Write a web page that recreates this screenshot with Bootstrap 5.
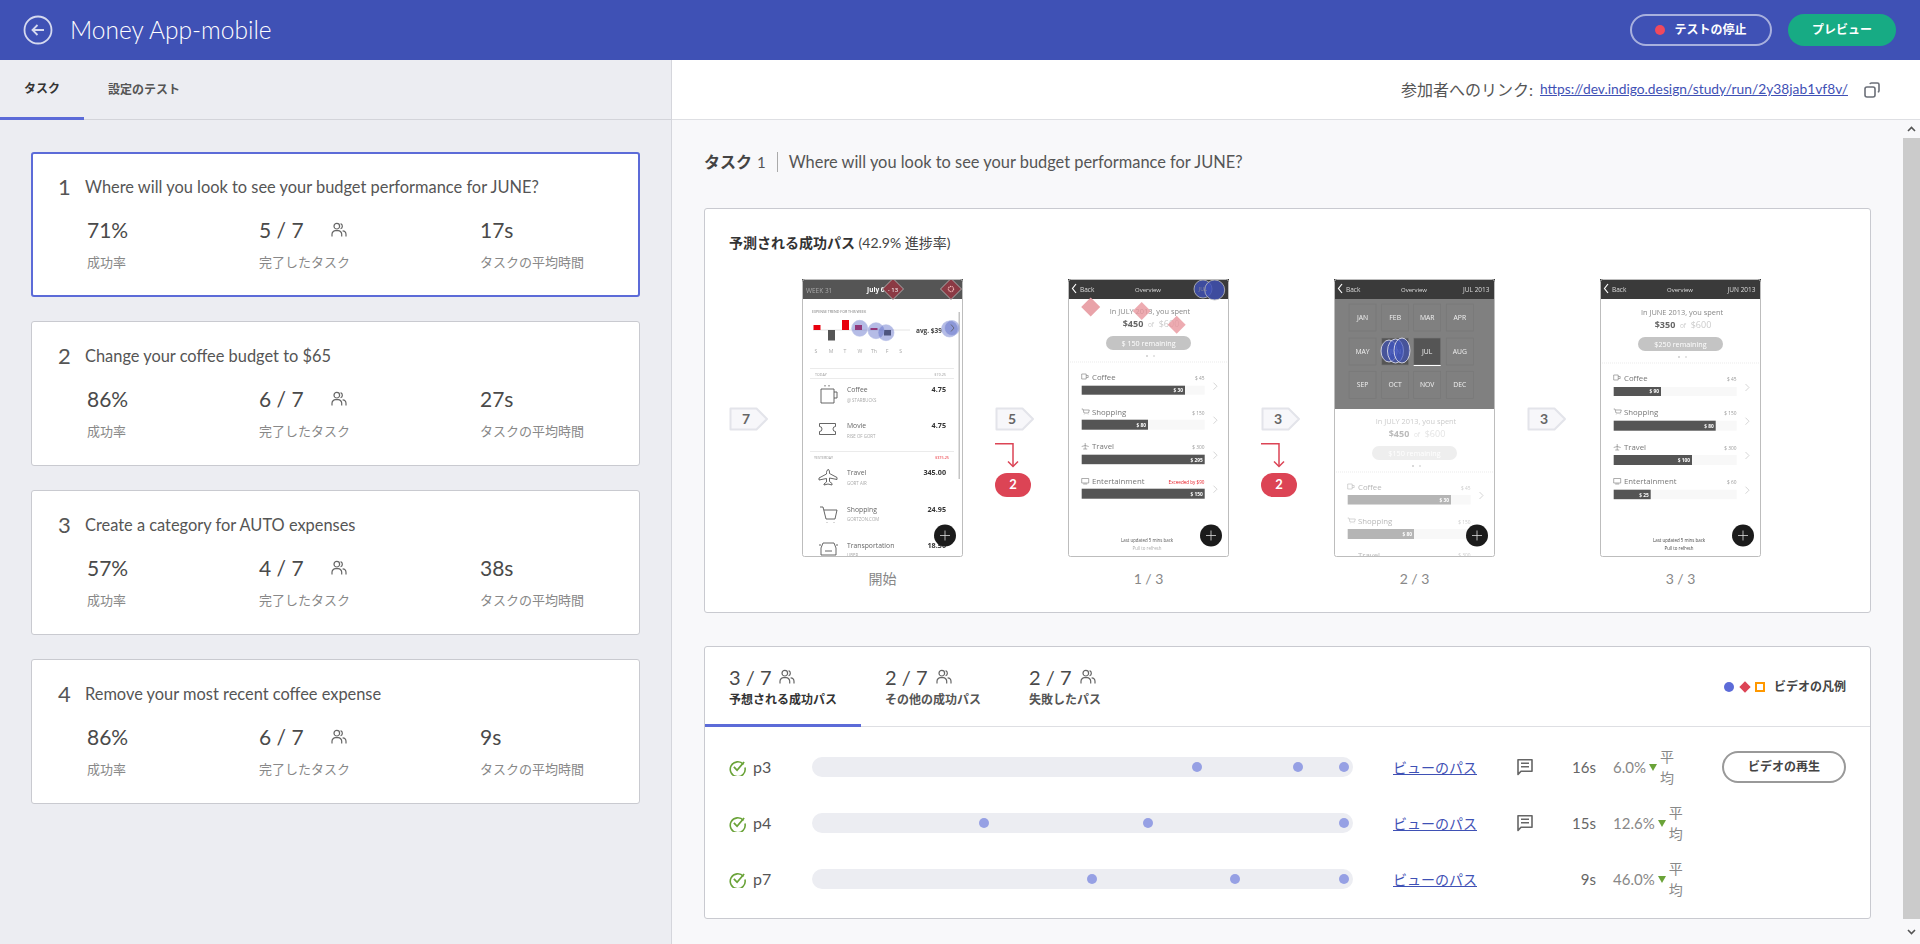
<!DOCTYPE html>
<html lang="ja">
<head>
<meta charset="UTF-8">
<title>Money App-mobile</title>
<link href="https://cdn.jsdelivr.net/npm/bootstrap@5.3.3/dist/css/bootstrap.min.css" rel="stylesheet">
<style>
  body { height: 944px; overflow: hidden; font-family: Lato, "Noto Sans CJK JP", sans-serif; color: #555; background: #fff; }
  .app-head { height: 60px; background: #3f51b5; padding: 0 24px 0 22px; }
  .app-title { font-size: 24.5px; font-weight: 300; color: #fff; margin-left: 16px; }
  .btn-stop, .btn-preview { height: 32px; border-radius: 16px; font-size: 12px; font-weight: 700; color: #fff; padding: 0; }
  .btn-stop { width: 142px; border: 2px solid rgba(255,255,255,.55); }
  .btn-preview { width: 108px; background: #17ab84; border: 0; margin-left: 16px; }
  .rec-dot { width: 10px; height: 10px; border-radius: 50%; background: #f0495d; margin-right: 9px; }
  .main-area { height: 884px; }
  .side-pane { width: 672px; background: #ecedf2; border-right: 1px solid #d5d6dc; }
  .side-tabs { height: 60px; border-bottom: 1px solid #d3d4da; }
  .side-tab { height: 60px; font-size: 12px; font-weight: 700; color: #555; padding: 0 24px; display: flex; align-items: center; }
  .side-tab.on { color: #333; border-bottom: 3px solid #5c6bd8; }
  .task-list { padding: 32px 31px; gap: 24px; }
  .task-box { height: 145px; border: 1px solid #c9cad0; border-radius: 3px; background: #fff; padding: 22px 26px 0; }
  .task-box.on { border: 2px solid #5c6bd8; padding: 21px 25px 0; }
  .task-num { width: 27px; font-size: 22px; line-height: 24px; color: #555; }
  .task-q { font-size: 16.4px; line-height: 24px; color: #555; }
  .stat-line { margin-top: 17px; padding-left: 29px; }
  .stat-a { width: 172px; }
  .stat-b { width: 221px; }
  .stat-c { width: 130px; }
  .stat-val { font-size: 21px; line-height: 28px; color: #4a4a4a; display: flex; align-items: center; }
  .stat-val svg { margin-left: 27px; }
  .stat-lab { font-size: 13px; line-height: 20px; color: #888; margin-top: 8px; }
  .link-bar { height: 60px; border-bottom: 1px solid #dedfe3; padding-right: 40px; }
  .link-lab { font-size: 16px; color: #555; margin-right: 7px; }
  .link-url { font-size: 13.8px; color: #3f51b5; margin-right: 16px; }
  .scroll-wrap { height: 824px; background: #f8f8fa; }
  .page-body { padding: 32px 32px 0; width: 1231px; }
  .fake-bar { width: 17px; background: #f8f8fa; }
  .fake-btn { height: 18px; }
  .fake-thumb { height: 781px; background: #cbcbcb; }
  .q-head { height: 24px; margin-top: -2px; margin-bottom: 34px; }
  .q-tag { font-size: 16px; font-weight: 700; color: #444; }
  .q-n { font-size: 15px; margin-left: 5px; padding-right: 11px; border-right: 1px solid #aaa; line-height: 20px; margin-right: 11px; }
  .panel-box { background: #fff; border: 1px solid #c9cad0; border-radius: 3px; }
  .path-box { height: 405px; padding: 24px 24px 0; margin-bottom: 33px; }
  .path-title { font-size: 14px; line-height: 20px; color: #444; margin-bottom: 26px; }
  .path-title b { color: #333; }
  .step-side { width: 73px; padding-top: 128px; }
  .step-main { width: 161px; margin-right: 32px; }
  .step-main svg { display: block; }
  .step-cap { font-size: 14px; color: #888; text-align: center; margin-top: 11px; }
  .fail-arrow { display: block; margin-top: 12px; }
  .fail-pill { width: 36px; height: 24px; border-radius: 12px; background: #dc4455; color: #fff; font-size: 13px; font-weight: 700; margin-top: 5px; }
  .scr { filter: blur(.3px); }
  .scr text { font-family: "Open Sans", sans-serif; }
  .run-box { height: 273px; }
  .run-tabs { height: 80px; border-bottom: 1px solid #dedfe3; }
  .run-tab { padding: 16px 24px 0; height: 80px; }
  .run-tab.on { border-bottom: 3px solid #5c6bd8; }
  .run-count { font-size: 20px; line-height: 28px; color: #4a4a4a; }
  .run-count svg { margin-left: 8px; }
  .run-lab { font-size: 12px; line-height: 18px; font-weight: 700; color: #555; }
  .run-tab.on .run-lab { color: #333; }
  .legend-lab { font-size: 12px; font-weight: 700; color: #444; margin-left: 9px; }
  .legend-wrap { padding-right: 24px; margin-left: auto; }
  .lg-dot { width: 10px; height: 10px; border-radius: 50%; background: #5c6bd8; }
  .lg-dia { width: 8px; height: 8px; background: #dc4455; transform: rotate(45deg); margin: 0 6px 0 7px; }
  .lg-sq { width: 10px; height: 10px; border: 2px solid #ff9800; }
  .run-rows { padding-top: 12px; }
  .run-row { height: 56px; padding: 0 24px; }
  .run-who { width: 83px; font-size: 16px; color: #555; }
  .run-who svg { margin-right: 7px; }
  .run-track { width: 541px; height: 20px; border-radius: 10px; background: #ecedf2; position: relative; }
  .run-dot { position: absolute; top: 5px; width: 10px; height: 10px; margin-left: -5px; border-radius: 50%; background: #96a0e4; }
  .run-link { width: 84px; margin-left: 40px; font-size: 14px; color: #3f51b5; }
  .run-note { width: 16px; margin-left: 40px; }
  .run-time { width: 63px; font-size: 15px; text-align: right; color: #666; }
  .run-pct { margin-left: 17px; font-size: 15px; color: #888; }
  .tri-down { width: 0; height: 0; border-left: 4px solid transparent; border-right: 4px solid transparent; border-top: 7px solid #6aa338; margin: 0 3px 0 3px; }
  .avg-lab { width: 15px; font-size: 14px; line-height: 21px; color: #888; }
  .btn-play { width: 124px; height: 32px; border: 2px solid #999; border-radius: 16px; font-size: 12px; font-weight: 700; color: #444; padding: 0; background: #fff; margin-left: auto; }
</style>
</head>
<body>
<svg width="0" height="0" class="position-absolute">
  <symbol id="ic-people" viewBox="0 0 16 16">
    <g fill="none" stroke="#666" stroke-width="1.2">
      <circle cx="5.8" cy="4.2" r="2.8"/>
      <path d="M1 14.5v-2.2a3.6 3.6 0 0 1 3.6-3.6h2.5a3.6 3.6 0 0 1 3.6 3.6v2.2"/>
      <path d="M9.6 1.6a2.8 2.8 0 0 1 0 5.2"/>
      <path d="M11.6 8.8a3.6 3.6 0 0 1 3.4 3.6v2.1"/>
    </g>
  </symbol>
  <symbol id="ic-check" viewBox="0 0 16 16">
    <path d="M13.6 5.2A7 7 0 1 0 15 8" fill="none" stroke="#6aa338" stroke-width="1.5"/>
    <path d="M4.6 7.4l3 3.2 6.6-7.8" fill="none" stroke="#6aa338" stroke-width="1.7"/>
  </symbol>
  <symbol id="ic-note" viewBox="0 0 16 18">
    <path d="M1 1.8h14v11.4H4L1 16.4z" fill="none" stroke="#666" stroke-width="1.6" stroke-linejoin="round"/>
    <path d="M4 5.2h8M4 8.8h8" stroke="#666" stroke-width="1.5"/>
  </symbol>
</svg>

<header class="app-head d-flex align-items-center">
  <svg width="32" height="32" viewBox="0 0 32 32">
    <circle cx="16" cy="16" r="13.5" fill="none" stroke="#d5d9ef" stroke-width="1.8"/>
    <path d="M22 16H10.5M15.5 11l-5 5 5 5" fill="none" stroke="#d5d9ef" stroke-width="1.8"/>
  </svg>
  <div class="app-title">Money App-mobile</div>
  <div class="ms-auto d-flex">
    <button class="btn btn-stop d-flex align-items-center justify-content-center"><span class="rec-dot"></span>テストの停止</button>
    <button class="btn btn-preview">プレビュー</button>
  </div>
</header>

<div class="main-area d-flex">
  <aside class="side-pane flex-shrink-0">
    <div class="side-tabs d-flex">
      <div class="side-tab on">タスク</div>
      <div class="side-tab">設定のテスト</div>
    </div>
    <div class="task-list d-flex flex-column">
      <div class="task-box on">
        <div class="d-flex"><div class="task-num">1</div><div class="task-q">Where will you look to see your budget performance for JUNE?</div></div>
        <div class="stat-line d-flex">
          <div class="stat-a"><div class="stat-val">71%</div><div class="stat-lab">成功率</div></div>
          <div class="stat-b"><div class="stat-val">5 / 7<svg width="16" height="16"><use href="#ic-people"/></svg></div><div class="stat-lab">完了したタスク</div></div>
          <div class="stat-c"><div class="stat-val">17s</div><div class="stat-lab">タスクの平均時間</div></div>
        </div>
      </div>
      <div class="task-box">
        <div class="d-flex"><div class="task-num">2</div><div class="task-q">Change your coffee budget to $65</div></div>
        <div class="stat-line d-flex">
          <div class="stat-a"><div class="stat-val">86%</div><div class="stat-lab">成功率</div></div>
          <div class="stat-b"><div class="stat-val">6 / 7<svg width="16" height="16"><use href="#ic-people"/></svg></div><div class="stat-lab">完了したタスク</div></div>
          <div class="stat-c"><div class="stat-val">27s</div><div class="stat-lab">タスクの平均時間</div></div>
        </div>
      </div>
      <div class="task-box">
        <div class="d-flex"><div class="task-num">3</div><div class="task-q">Create a category for AUTO expenses</div></div>
        <div class="stat-line d-flex">
          <div class="stat-a"><div class="stat-val">57%</div><div class="stat-lab">成功率</div></div>
          <div class="stat-b"><div class="stat-val">4 / 7<svg width="16" height="16"><use href="#ic-people"/></svg></div><div class="stat-lab">完了したタスク</div></div>
          <div class="stat-c"><div class="stat-val">38s</div><div class="stat-lab">タスクの平均時間</div></div>
        </div>
      </div>
      <div class="task-box">
        <div class="d-flex"><div class="task-num">4</div><div class="task-q">Remove your most recent coffee expense</div></div>
        <div class="stat-line d-flex">
          <div class="stat-a"><div class="stat-val">86%</div><div class="stat-lab">成功率</div></div>
          <div class="stat-b"><div class="stat-val">6 / 7<svg width="16" height="16"><use href="#ic-people"/></svg></div><div class="stat-lab">完了したタスク</div></div>
          <div class="stat-c"><div class="stat-val">9s</div><div class="stat-lab">タスクの平均時間</div></div>
        </div>
      </div>
    </div>
  </aside>

  <section class="flex-grow-1">
    <div class="link-bar d-flex align-items-center justify-content-end">
      <span class="link-lab">参加者へのリンク:</span>
      <a class="link-url" href="#">https://dev.indigo.design/study/run/2y38jab1vf8v/</a>
      <svg width="16" height="16" viewBox="0 0 16 16" fill="none" stroke="#6b6f78" stroke-width="1.6">
        <rect x="1" y="5" width="10" height="10" rx="2"/>
        <path d="M6 2.2A1.5 1.5 0 0 1 7.4 1h6A1.6 1.6 0 0 1 15 2.6v6a1.5 1.5 0 0 1-1.2 1.4"/>
      </svg>
    </div>
    <div class="scroll-wrap d-flex">
      <div class="page-body">
        <div class="q-head d-flex align-items-center">
          <span class="q-tag">タスク</span><span class="q-n">1</span>
          <span class="task-q">Where will you look to see your budget performance for JUNE?</span>
        </div>

        <div class="panel-box path-box">
          <div class="path-title"><b>予測される成功パス</b> (42.9% 進捗率)</div>
          <div class="d-flex" id="steps"></div>
        </div>

        <div class="panel-box run-box">
          <div class="run-tabs d-flex">
            <div class="run-tab on">
              <div class="run-count d-flex align-items-center">3 / 7<svg width="16" height="16"><use href="#ic-people"/></svg></div>
              <div class="run-lab">予想される成功パス</div>
            </div>
            <div class="run-tab">
              <div class="run-count d-flex align-items-center">2 / 7<svg width="16" height="16"><use href="#ic-people"/></svg></div>
              <div class="run-lab">その他の成功パス</div>
            </div>
            <div class="run-tab">
              <div class="run-count d-flex align-items-center">2 / 7<svg width="16" height="16"><use href="#ic-people"/></svg></div>
              <div class="run-lab">失敗したパス</div>
            </div>
            <div class="legend-wrap d-flex align-items-center">
              <span class="lg-dot"></span><span class="lg-dia"></span><span class="lg-sq"></span>
              <span class="legend-lab">ビデオの凡例</span>
            </div>
          </div>
          <div class="run-rows">
            <div class="run-row d-flex align-items-center">
              <div class="run-who d-flex align-items-center"><svg width="17" height="17"><use href="#ic-check"/></svg>p3</div>
              <div class="run-track">
                <span class="run-dot" style="left:71.1%"></span><span class="run-dot" style="left:89.8%"></span><span class="run-dot" style="left:98.3%"></span>
              </div>
              <a class="run-link" href="#">ビューのパス</a>
              <div class="run-note"><svg class="d-block" width="16" height="18"><use href="#ic-note"/></svg></div>
              <div class="run-time">16s</div>
              <div class="run-pct d-flex align-items-center">6.0%<span class="tri-down"></span><span class="avg-lab">平均</span></div>
              <button class="btn btn-play">ビデオの再生</button>
            </div>
            <div class="run-row d-flex align-items-center">
              <div class="run-who d-flex align-items-center"><svg width="17" height="17"><use href="#ic-check"/></svg>p4</div>
              <div class="run-track">
                <span class="run-dot" style="left:31.8%"></span><span class="run-dot" style="left:62.1%"></span><span class="run-dot" style="left:98.3%"></span>
              </div>
              <a class="run-link" href="#">ビューのパス</a>
              <div class="run-note"><svg class="d-block" width="16" height="18"><use href="#ic-note"/></svg></div>
              <div class="run-time">15s</div>
              <div class="run-pct d-flex align-items-center">12.6%<span class="tri-down"></span><span class="avg-lab">平均</span></div>
            </div>
            <div class="run-row d-flex align-items-center">
              <div class="run-who d-flex align-items-center"><svg width="17" height="17"><use href="#ic-check"/></svg>p7</div>
              <div class="run-track">
                <span class="run-dot" style="left:51.8%"></span><span class="run-dot" style="left:78.1%"></span><span class="run-dot" style="left:98.3%"></span>
              </div>
              <a class="run-link" href="#">ビューのパス</a>
              <div class="run-note"></div>
              <div class="run-time">9s</div>
              <div class="run-pct d-flex align-items-center">46.0%<span class="tri-down"></span><span class="avg-lab">平均</span></div>
            </div>
          </div>
        </div>
      </div>

      <div class="fake-bar ms-auto flex-shrink-0 d-flex flex-column">
        <div class="fake-btn d-flex align-items-center justify-content-center">
          <svg width="9" height="6" viewBox="0 0 9 6"><path d="M1 5l3.5-3.5L8 5" fill="none" stroke="#555" stroke-width="1.6"/></svg>
        </div>
        <div class="fake-thumb"></div>
        <div class="flex-grow-1 d-flex align-items-center justify-content-center">
          <svg width="9" height="6" viewBox="0 0 9 6"><path d="M1 1l3.5 3.5L8 1" fill="none" stroke="#555" stroke-width="1.6"/></svg>
        </div>
      </div>
    </div>
  </section>
</div>

<script>
  // small helpers for the phone pictures (all in pixels of the 161x278 picture)
  function tx(x, y, s, size, fill, extra) {
    return '<text x="' + x + '" y="' + y + '" font-size="' + size + '" fill="' + fill + '" ' + (extra || '') + '>' + s + '</text>';
  }
  function diamond(cx, cy, r, fill, stroke) {
    return '<path d="M' + cx + ' ' + (cy - r) + 'L' + (cx + r) + ' ' + cy + 'L' + cx + ' ' + (cy + r) + 'L' + (cx - r) + ' ' + cy + 'Z" fill="' + fill + '" stroke="' + (stroke || 'none') + '" stroke-linejoin="round"/>';
  }
  function blob(cx, cy, r, dark) {
    return '<circle cx="' + cx + '" cy="' + cy + '" r="' + r + '" fill="' + (dark ? 'rgba(64,80,180,.82)' : 'rgba(92,107,200,.45)') + '" stroke="' + (dark ? 'rgba(190,190,190,.8)' : 'rgba(180,188,230,.6)') + '"/>';
  }
  function fab() {
    return '<circle cx="143" cy="256.5" r="11" fill="#1b1b1b"/><path d="M138 256.5h10M143 251.5v10" stroke="#ddd" stroke-width=".8"/>';
  }
  function topBar(right) {
    return '<rect width="161" height="20" fill="#3a3a3a"/>' +
      '<path d="M8 5l-3.5 4.5L8 14" fill="none" stroke="#fff" stroke-width="1.2"/>' +
      tx(12, 13, 'Back', 6.5, '#ddd') + tx(80, 12.5, 'Overview', 6, '#ddd', 'text-anchor="middle"') +
      (right ? tx(155.5, 13, right, 6.5, '#ddd', 'text-anchor="end"') : '');
  }
  const miniIcons = {
    Coffee: 'M0 0h4.5v5H0zM4.5 1.5h2v2h-2',
    Shopping: 'M0 0h1.3l1 4h4.5l.8-3H1.8M2.5 5.5v.3M6.5 5.5v.3',
    Travel: 'M3.5 0v6M0 3.5l3.5-1 3.5 1M1.5 6h4',
    Entertainment: 'M0 .5h7v4.5H0zM1.5 6h4'
  };
  function spendRows(rows, muted) {
    let out = '';
    rows.forEach(function (r) {
      const c = muted ? '#b8b8b8' : '#777';
      out += '<path transform="translate(13.7 ' + (r.y - 6) + ')" d="' + miniIcons[r.name] + '" fill="none" stroke="' + c + '" stroke-width=".6"/>';
      out += tx(24, r.y, r.name, 7.8, c);
      out += tx(136.5, r.y - .5, r.total, r.red ? 4.6 : 4.8, r.red ? '#e8202a' : (muted ? '#ccc' : '#999'), 'text-anchor="end"');
      out += '<rect x="13.7" y="' + r.bar + '" width="123" height="' + r.h + '" fill="#f8f8f8"/>';
      out += '<rect x="13.7" y="' + r.bar + '" width="' + (r.to - 13.7) + '" height="' + r.h + '" fill="' + (muted ? '#b5b5b5' : '#555') + '"/>';
      out += tx(r.to - 2, r.bar + r.h - 2.6, r.val, 4.8, '#fff', 'text-anchor="end" font-weight="700"');
      if (!r.noArrow) out += '<path d="M145.5 ' + (r.bar - 3) + 'l3.5 3.5-3.5 3.5" fill="none" stroke="#bbb" stroke-width=".6"/>';
    });
    return out;
  }
  function summary(y, label, a, b, pill, muted) {
    const ink = muted ? '#ccc' : '#888', gone = muted ? '#e4e4e4' : '#ccc';
    return tx(82, y, label, 7.4, ink, 'text-anchor="middle"') +
      tx(65, y + 13, a, 9, muted ? '#bbb' : '#666', 'text-anchor="middle" font-weight="700"') +
      tx(83, y + 13, 'of', 6.5, gone, 'text-anchor="middle"') + tx(101, y + 13, b, 9, gone, 'text-anchor="middle"') +
      '<rect x="38" y="' + (y + 22) + '" width="85" height="14" rx="7" fill="' + (muted ? '#eee' : '#c4c4c4') + '"/>' +
      tx(80.5, y + 31.5, pill, 7.2, '#fff', 'text-anchor="middle"') +
      '<circle cx="79" cy="' + (y + 42) + '" r="1" fill="#ccc"/><circle cx="86" cy="' + (y + 42) + '" r="1" fill="#ddd"/>' +
      '<path d="M0 ' + (y + 48) + 'H161" stroke="#ddd" stroke-width=".6" stroke-dasharray="1 1"/>';
  }
  function wrapScreen(inner) {
    return '<svg class="scr" width="161" height="278" viewBox="0 0 161 278">' + inner +
      '<rect x=".5" y=".5" width="160" height="277" rx="2" fill="none" stroke="#bdbdbd"/></svg>';
  }

  function phoneStart() {
    let s = '<rect width="161" height="20" fill="#555"/>';
    s += tx(4, 13.5, 'WEEK 31', 6.5, '#aaa') + tx(65, 13, 'July 6', 6.5, '#fff', 'font-weight="700"');
    s += tx(10, 33.5, 'EXPENSE TREND FOR THIS WEEK', 3.6, '#777');
    s += '<path d="M11 51H108" stroke="#ddd" stroke-width=".8"/>';
    s += '<rect x="11.5" y="46" width="7" height="5" fill="#e8000d"/><rect x="26" y="51" width="7" height="10.5" fill="#555"/><rect x="40" y="41" width="7" height="10" fill="#e8000d"/>';
    s += '<rect x="53" y="46" width="7" height="5" fill="#c0103a"/><rect x="68.5" y="49" width="7" height="2" fill="#c0103a"/><rect x="82" y="51" width="7" height="5.5" fill="#444"/>';
    s += tx(114, 54, 'avg. $39', 6.5, '#444', 'font-weight="700"');
    [['S',14],['M',29],['T',43],['W',58],['Th',72],['F',85],['S',98.7]].forEach(function (d) {
      s += tx(d[1], 74, d[0], 5.2, '#aaa', 'text-anchor="middle"');
    });
    s += '<path d="M8 89.5H152M8 99.5H152M8 172.5H152" stroke="#e2e2e2" stroke-width=".7"/>';
    s += tx(13, 96.5, 'TODAY', 3.6, '#999') + tx(144, 96.5, '$19.25', 3.8, '#999', 'text-anchor="end"');
    s += tx(12, 179.5, 'YESTERDAY', 3.6, '#999') + tx(147, 179.5, '$375.25', 3.8, '#e8202a', 'text-anchor="end"');
    [['Coffee','@ STARBUCKS','4.75',113],['Movie','RISE OF GORT','4.75',149],['Travel','GORT AIR','345.00',196],['Shopping','GORTZON.COM','24.95',232.5],['Transportation','UBER','18.50',268.5]].forEach(function (r) {
      s += tx(45, r[3], r[0], 6.8, '#666') + tx(45, r[3] + 9.5, r[1], 4.4, '#aaa') + tx(144, r[3], r[2], 7.2, '#333', 'text-anchor="end" font-weight="700"');
    });
    // icons of the list
    s += '<g fill="none" stroke="#555" stroke-width=".9">';
    s += '<path d="M19 110h13v14H19zM32 113h3v6h-3M23 106v1.5M27 106v1.5"/>';
    s += '<path d="M17.5 144.5h16v3a2.5 2.5 0 0 0 0 5v3h-16v-3a2.5 2.5 0 0 0 0-5z"/>';
    s += '<path d="M26 190.5c1.5 0 1.5 2 1.5 4l7.5 4v2l-7.5-1.5v3.5l2.5 2v1.5l-4-1-4 1V205l2.5-2v-3.5l-7.5 1.5v-2l7.5-4c0-2 0-4 1.5-4z"/>';
    s += '<path d="M18 228h3l3 12h9l2-9H22M25 243v.5M32 243v.5"/>';
    s += '<path d="M19 276v-7l2-5h11l2 5v7zM17 266h2M34 266h2M23 272h7"/>';
    s += '</g>';
    s += '<rect x="156.5" y="33" width="1.5" height="167" fill="#c4c4c4"/>';
    s += fab();
    s += diamond(91, 10, 10.5, '#8b3a44', '#aaa') + tx(91, 12.5, '- 13', 6, '#fff', 'text-anchor="middle"');
    s += diamond(149, 10, 10.5, '#8b3a44', '#aaa') + '<circle cx="149" cy="10" r="2.6" fill="none" stroke="#f0b5b5" stroke-width="1.2" stroke-dasharray="1.2 .6"/>';
    s += blob(57.7, 49.3, 8) + blob(74, 51.7, 8) + blob(84, 53.7, 8) + blob(147.5, 50, 8) + blob(150, 49, 7.5);
    s += '<path d="M149 45.5l3 3.5-3 3.5" fill="none" stroke="#555" stroke-width=".7"/>';
    return wrapScreen(s);
  }
  function phoneOne() {
    let s = topBar('');
    s += summary(35, 'In JULY 2013, you spent', '$450', '$600', '$ 150 remaining');
    s += spendRows([
      { name: 'Coffee', y: 101, total: '$ 45', bar: 106.7, h: 9, to: 117, val: '$ 30' },
      { name: 'Shopping', y: 136, total: '$ 150', bar: 140.7, h: 10, to: 80, val: '$ 80' },
      { name: 'Travel', y: 170, total: '$ 300', bar: 175.7, h: 9.5, to: 136.7, val: '$ 295' },
      { name: 'Entertainment', y: 205, total: 'Exceeded by $90', red: true, bar: 209.7, h: 10, to: 136.7, val: '$ 150' }
    ]);
    s += tx(79, 263, 'Last updated 5 mins back', 4.4, '#555', 'text-anchor="middle"') + tx(79, 271, 'Pull to refresh', 4.4, '#aaa', 'text-anchor="middle"');
    s += fab();
    s += blob(135, 10, 9, true) + blob(146.7, 11, 10, true);
    s += tx(135, 12, 'JUL', 5.5, '#889', 'text-anchor="middle"');
    s += diamond(22.7, 28, 9.5, '#e9a3a9') + diamond(73.7, 32, 9, 'rgba(233,150,158,.8)') + diamond(108.7, 45.7, 9, 'rgba(233,150,158,.8)');
    return wrapScreen(s);
  }
  function phoneTwo() {
    let s = '<rect y="20" width="161" height="110" fill="#808080"/>' + topBar('JUL 2013');
    const xs = [15, 47.7, 79.7, 112.3], ys = [25, 59, 92.3];
    ['JAN','FEB','MAR','APR','MAY','JUN','JUL','AUG','SEP','OCT','NOV','DEC'].forEach(function (m, i) {
      const x = xs[i % 4], y = ys[Math.floor(i / 4)], dark = m === 'JUN' || m === 'JUL';
      s += '<rect x="' + x + '" y="' + y + '" width="27" height="27" fill="' + (dark ? '#555' : 'none') + '" stroke="#777" stroke-width=".7"/>';
      s += tx(x + 13.5, y + 16, m, 6.8, '#f0f0f0', 'text-anchor="middle"');
    });
    s += '<path d="M79.7 86.5h27" stroke="#fff"/>';
    s += summary(145, 'In JULY 2013, you spent', '$450', '$600', '$150 remaining', true);
    s += spendRows([
      { name: 'Coffee', y: 211, total: '$ 45', bar: 216, h: 9.5, to: 117, val: '$ 30' },
      { name: 'Shopping', y: 245, total: '$ 150', bar: 250, h: 10, to: 80, val: '$ 80', noArrow: true }
    ], true);
    s += tx(24, 278.5, 'Travel', 7.8, '#b8b8b8') + tx(136.5, 278, '$ 300', 4.8, '#ccc', 'text-anchor="end"');
    s += fab();
    s += '<g fill="rgba(64,84,190,.65)" stroke="rgba(225,225,235,.85)" stroke-width="1"><ellipse cx="55" cy="72" rx="8" ry="11"/><ellipse cx="61.5" cy="72" rx="8" ry="12"/><ellipse cx="68" cy="71.5" rx="8" ry="12.5"/></g>';
    return wrapScreen(s);
  }
  function phoneThree() {
    let s = topBar('JUN 2013');
    s += summary(36, 'In JUNE 2013, you spent', '$350', '$600', '$250 remaining');
    s += spendRows([
      { name: 'Coffee', y: 102, total: '$ 45', bar: 108, h: 9, to: 61, val: '$ 90' },
      { name: 'Shopping', y: 136, total: '$ 150', bar: 141.7, h: 10, to: 115.7, val: '$ 80' },
      { name: 'Travel', y: 171, total: '$ 300', bar: 176, h: 10, to: 92, val: '$ 100' },
      { name: 'Entertainment', y: 205, total: '$ 60', bar: 210.7, h: 9.5, to: 50.7, val: '$ 25' }
    ]);
    s += tx(79, 263, 'Last updated 5 mins back', 4.4, '#444', 'text-anchor="middle"') + tx(79, 271, 'Pull to refresh', 4.4, '#444', 'text-anchor="middle"');
    s += fab();
    return wrapScreen(s);
  }

  const tag = function (n) {
    return '<svg class="d-block" width="40" height="24" viewBox="0 0 40 24"><path d="M1.5 1.5H27.5L38 12 27.5 22.5H1.5Z" fill="#f7f7fa" stroke="#e3e4ea" stroke-width="2" stroke-linejoin="round"/><text x="17" y="17" text-anchor="middle" font-size="14" font-weight="700" fill="#666">' + n + '</text></svg>';
  };
  const fail = function (n) {
    return '<svg class="fail-arrow" width="30" height="25" viewBox="0 0 30 25" fill="none" stroke="#dc4455" stroke-width="1.5"><path d="M0 .8H18V23"/><path d="M13 18.5l5 5 5-5"/></svg>' +
      '<div class="fail-pill d-flex align-items-center justify-content-center">' + n + '</div>';
  };
  document.getElementById('steps').innerHTML = [
    { n: 7, shot: phoneStart(), cap: '開始' },
    { n: 5, bad: 2, shot: phoneOne(), cap: '1 / 3' },
    { n: 3, bad: 2, shot: phoneTwo(), cap: '2 / 3' },
    { n: 3, shot: phoneThree(), cap: '3 / 3' }
  ].map(function (st) {
    return '<div class="step-side">' + tag(st.n) + (st.bad ? fail(st.bad) : '') + '</div>' +
      '<div class="step-main">' + st.shot + '<div class="step-cap">' + st.cap + '</div></div>';
  }).join('');
</script>
<script src="https://cdn.jsdelivr.net/npm/bootstrap@5.3.3/dist/js/bootstrap.bundle.min.js"></script>
</body>
</html>
